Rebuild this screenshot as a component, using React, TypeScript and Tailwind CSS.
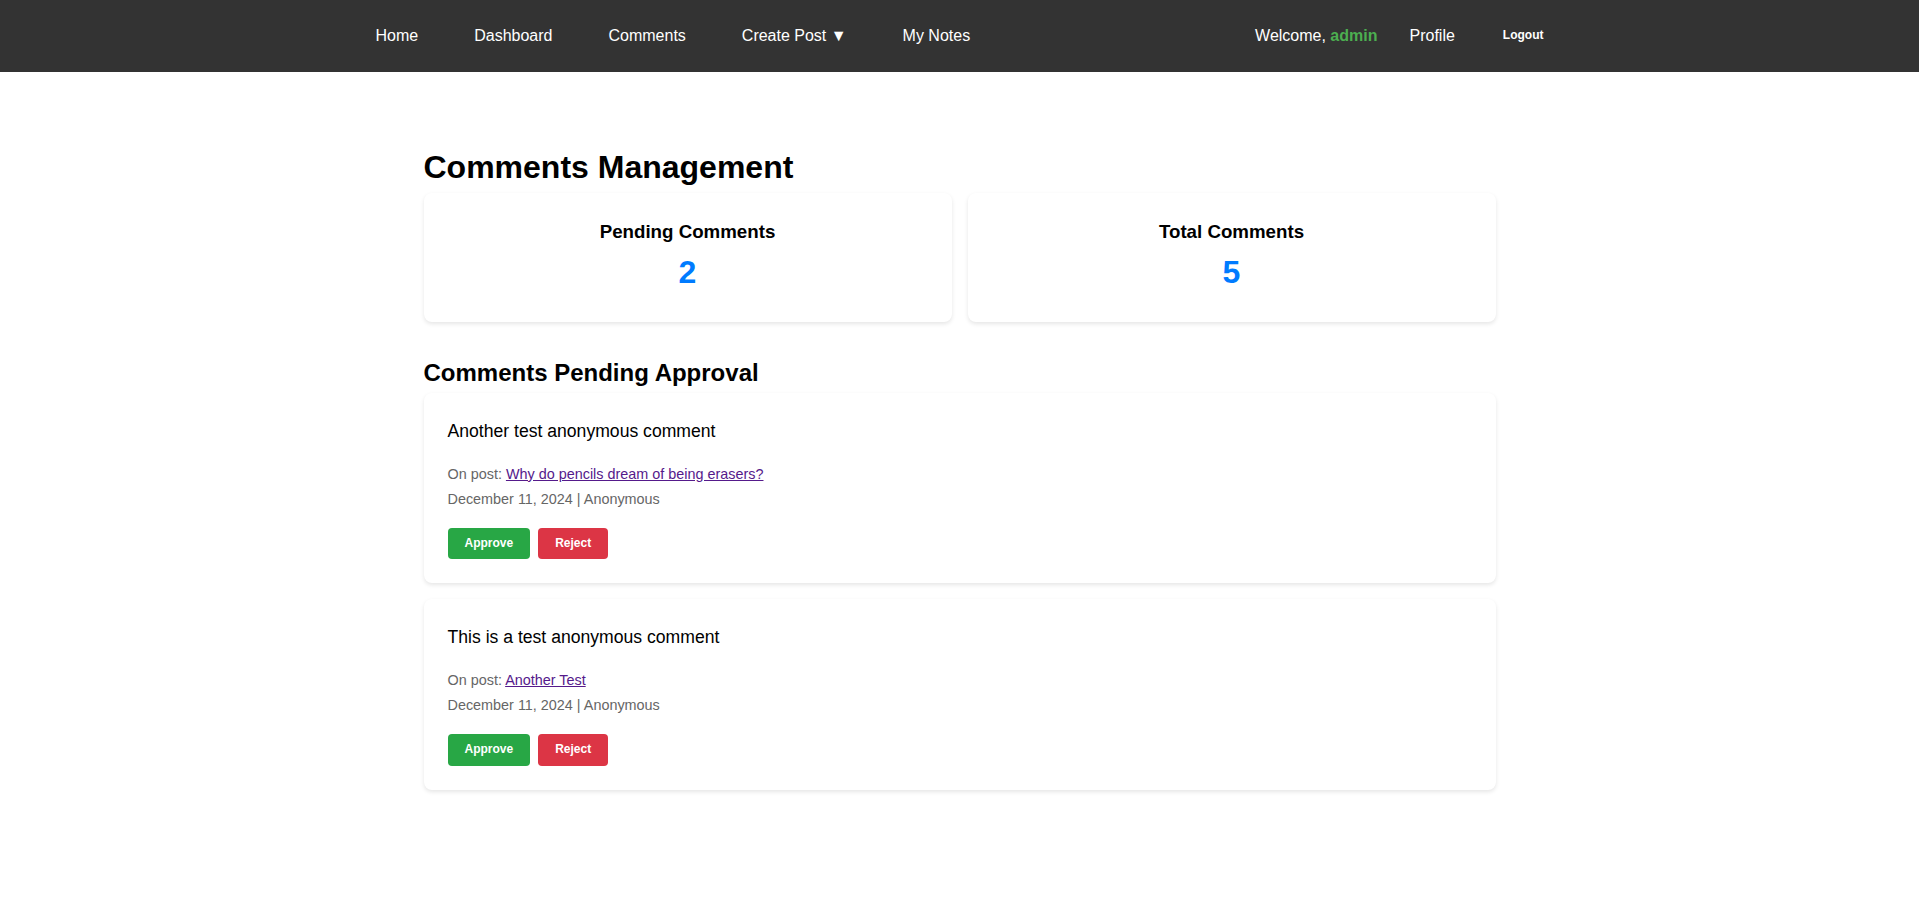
const navLinks = ["Home", "Dashboard", "Comments", "Create Post ▼", "My Notes"];

const pending = [
  {
    text: "Another test anonymous comment",
    post: "Why do pencils dream of being erasers?",
    date: "December 11, 2024",
    author: "Anonymous",
  },
  {
    text: "This is a test anonymous comment",
    post: "Another Test",
    date: "December 11, 2024",
    author: "Anonymous",
  },
];

function StatCard({ label, value }: { label: string; value: number }) {
  return (
    <div className="rounded-lg bg-white p-6 text-center shadow-[0_2px_4px_rgba(0,0,0,0.1)]">
      <h3 className="text-[18.72px] font-bold leading-[1.6]">{label}</h3>
      <p className="text-[32px] font-bold leading-[1.6] text-[#007bff]">{value}</p>
    </div>
  );
}

export default function App() {
  return (
    <div className="min-h-screen bg-white font-['Liberation_Sans',Arial,sans-serif] leading-[1.6] text-black">
      <nav className="bg-[#333] py-4">
        <div className="mx-auto flex max-w-[1200px] items-center justify-between">
          <div className="flex gap-6">
            {navLinks.map((l) => (
              <a key={l} href="#" className="px-4 py-2 text-base text-white">
                {l}
              </a>
            ))}
          </div>
          <div className="flex items-center gap-4 text-base text-white">
            <span>
              Welcome, <span className="font-bold text-[#4caf50]">admin</span>
            </span>
            <a href="#" className="px-4 py-2">
              Profile
            </a>
            <button className="bg-transparent px-4 py-2 text-[12px] font-bold leading-[1.6] text-white">
              Logout
            </button>
          </div>
        </div>
      </nav>

      <main className="mx-auto w-[1072px] pt-[70px]">
        <h1 className="text-[32px] font-bold leading-[1.6]">Comments Management</h1>
        <div className="grid grid-cols-2 gap-4">
          <StatCard label="Pending Comments" value={2} />
          <StatCard label="Total Comments" value={5} />
        </div>

        <h2 className="mt-8 text-[24px] font-bold leading-[1.6]">Comments Pending Approval</h2>
        <div className="flex flex-col gap-4">
          {pending.map((c) => (
            <div key={c.text} className="rounded-lg bg-white p-6 shadow-[0_2px_4px_rgba(0,0,0,0.1)]">
              <p className="mb-[18px] text-[17.6px]">{c.text}</p>
              <p className="text-[14.4px] text-[#666]">
                On post:{" "}
                <a href="#" className="text-[#551a8b] underline">
                  {c.post}
                </a>
              </p>
              <p className="mt-[2px] text-[14.4px] text-[#666]">
                {c.date} | {c.author}
              </p>
              <div className="mt-[17px] flex gap-2">
                <button className="rounded bg-[#28a745] px-[17px] py-[6px] text-[12px] font-bold leading-[1.6] text-white">
                  Approve
                </button>
                <button className="rounded bg-[#dc3545] px-[17px] py-[6px] text-[12px] font-bold leading-[1.6] text-white">
                  Reject
                </button>
              </div>
            </div>
          ))}
        </div>
      </main>
    </div>
  );
}
